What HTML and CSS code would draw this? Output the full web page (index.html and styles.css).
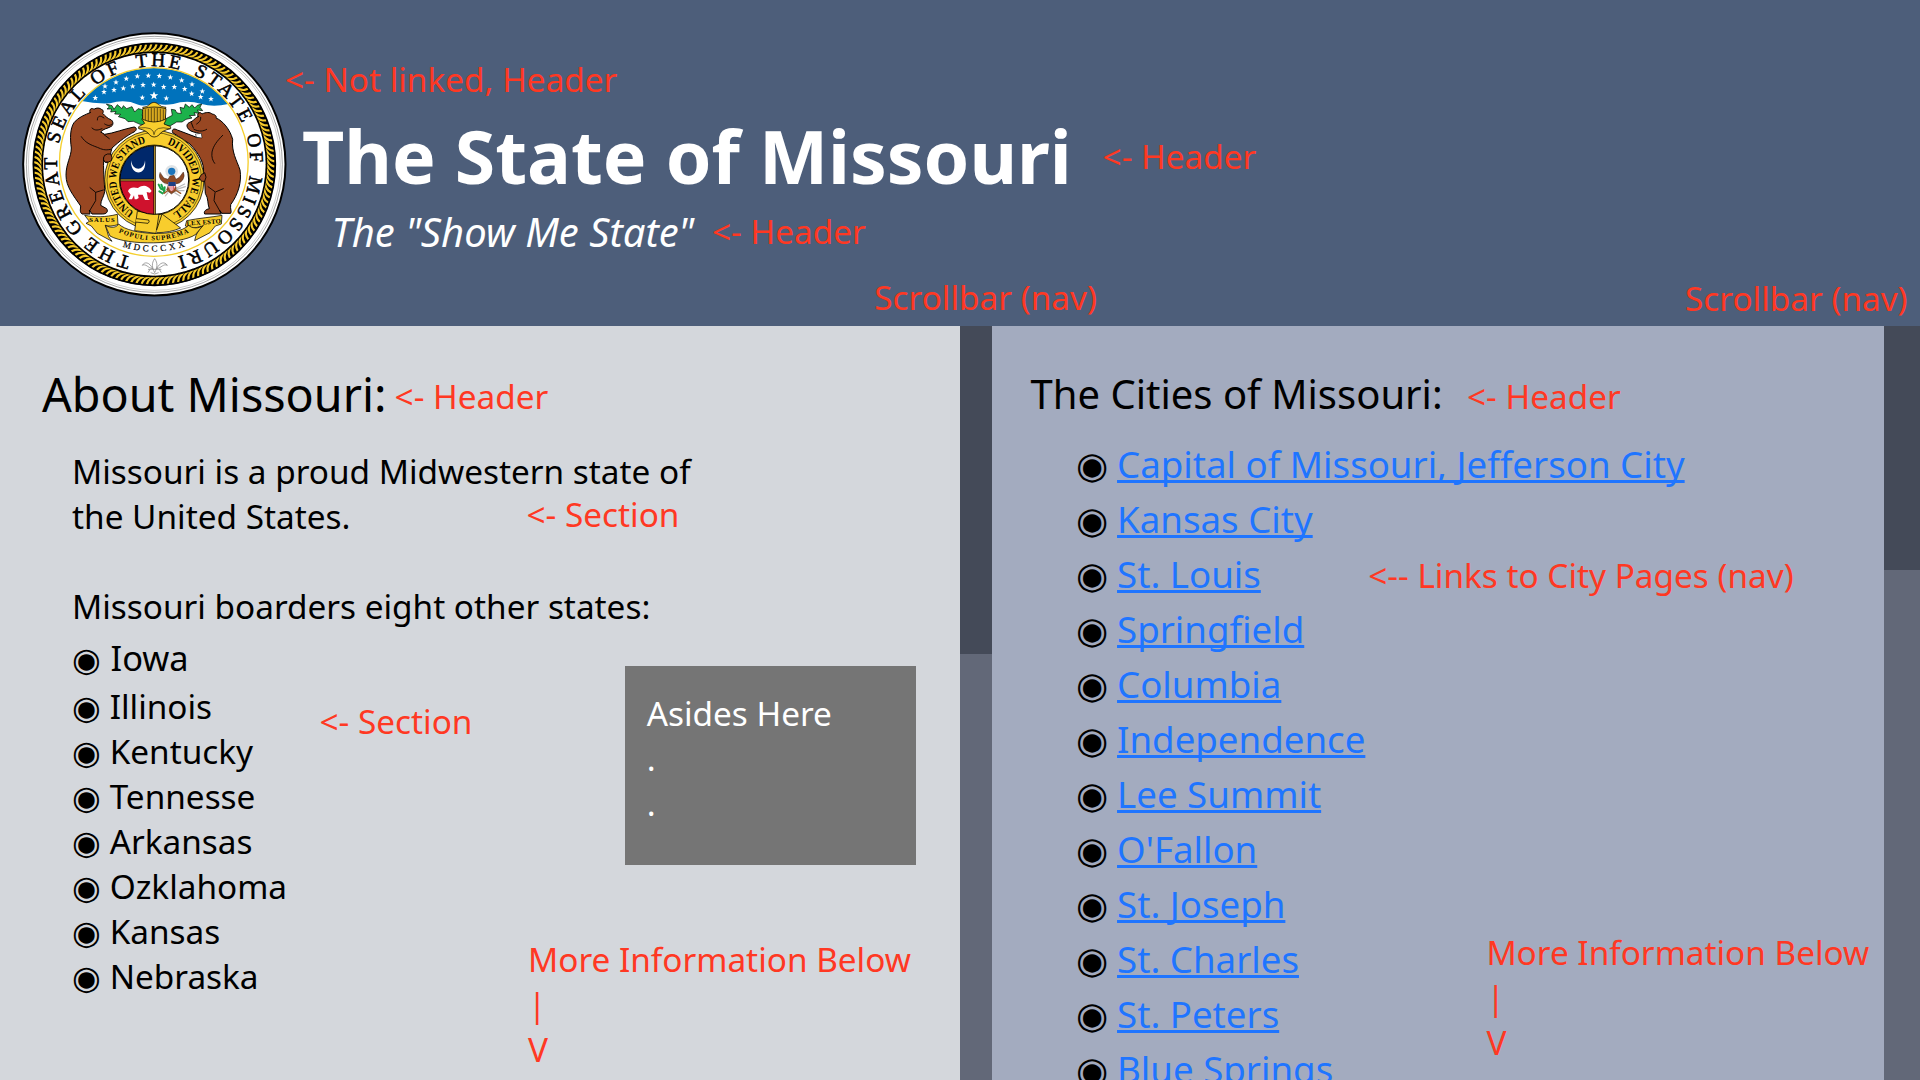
FILE: index.html
```
<!DOCTYPE html>
<html lang="en">
<head>
<meta charset="utf-8">
<title>The State of Missouri</title>
<link rel="stylesheet" href="styles.css">
</head>
<body>
<header class="masthead">
  <svg class="seal" viewBox="0 0 870 870" role="img" aria-label="Great Seal of the State of Missouri">
    <defs>
      <path id="strand" d="M416 98C424 92 430 92 436 82L440 72" fill="none" stroke="#f5c92b" stroke-width="6.5"/>
      <g id="rope3"><use href="#strand"/><use href="#strand" transform="rotate(2.5 433 433)"/><use href="#strand" transform="rotate(5 433 433)"/></g>
      <g id="rope9"><use href="#rope3"/><use href="#rope3" transform="rotate(7.5 433 433)"/><use href="#rope3" transform="rotate(15 433 433)"/></g>
      <g id="rope36"><use href="#rope9"/><use href="#rope9" transform="rotate(22.5 433 433)"/><use href="#rope9" transform="rotate(45 433 433)"/><use href="#rope9" transform="rotate(67.5 433 433)"/></g>
      <path id="legendRing" d="M431 719A290 290 0 0 1 431 139A290 290 0 0 1 431 719"/>
      <path id="beltRing" d="M433 594A114 114 0 0 1 433 366A114 114 0 0 1 433 594"/>
      <path id="mottoArc" d="M322 635Q432 687 542 635"/>
      <path id="yearArc" d="M335 679Q432 711 530 677"/>
      <path id="star" d="M0-9L2.3-2.8L8.6-2.8L3.5 1.1L5.3 7.3L0 3.7L-5.3 7.3L-3.5 1.1L-8.6-2.8L-2.3-2.8Z" fill="#fff"/>
      <clipPath id="field"><circle cx="431.5" cy="426" r="282"/></clipPath>
      <clipPath id="shield"><circle cx="433" cy="480" r="103"/></clipPath>
    </defs>
    <circle cx="433" cy="433" r="393.5" fill="#fff" stroke="#000" stroke-width="6"/>
    <circle cx="433" cy="433" r="384" fill="none" stroke="#555" stroke-width="1.6"/>
    <circle cx="433" cy="433" r="378" fill="none" stroke="#888" stroke-width="1.2"/>
    <circle cx="433" cy="433" r="350" fill="none" stroke="#000" stroke-width="28"/>
    <g><use href="#rope36"/><use href="#rope36" transform="rotate(90 433 433)"/><use href="#rope36" transform="rotate(180 433 433)"/><use href="#rope36" transform="rotate(270 433 433)"/></g>
    <circle cx="433" cy="433" r="363" fill="none" stroke="#000" stroke-width="5"/>
    <circle cx="433" cy="433" r="336.5" fill="none" stroke="#000" stroke-width="5"/>
    <g class="legend">
      <text textLength="139"><textPath href="#legendRing" startOffset="68">THE</textPath></text>
      <text textLength="234"><textPath href="#legendRing" startOffset="237">GREAT</textPath></text>
      <text textLength="175"><textPath href="#legendRing" startOffset="513">SEAL</textPath></text>
      <text textLength="85"><textPath href="#legendRing" startOffset="723">OF</textPath></text>
      <text textLength="130"><textPath href="#legendRing" startOffset="859">THE</textPath></text>
      <text textLength="209"><textPath href="#legendRing" startOffset="1034">STATE</textPath></text>
      <text textLength="84"><textPath href="#legendRing" startOffset="1281">OF</textPath></text>
      <text textLength="347"><textPath href="#legendRing" startOffset="1403">MISSOURI</textPath></text>
    </g>
    <g clip-path="url(#field)">
      <path d="M140 130H720V252Q690 250 655 252Q610 262 575 252Q530 238 490 252Q450 258 432 246Q410 262 385 254Q345 236 300 250Q255 252 215 243H140Z" fill="#0072bc"/>
    </g>
    <g>
      <use href="#star" x="349" y="176"/><use href="#star" x="382" y="169"/><use href="#star" x="415" y="167"/><use href="#star" x="448" y="168"/><use href="#star" x="481" y="172"/><use href="#star" x="515" y="181"/>
      <use href="#star" x="318" y="187"/><use href="#star" x="368" y="199"/><use href="#star" x="399" y="195"/><use href="#star" x="431" y="194"/><use href="#star" x="461" y="201"/><use href="#star" x="493" y="201"/><use href="#star" x="546" y="193"/>
      <use href="#star" x="285" y="199"/><use href="#star" x="340" y="205"/><use href="#star" x="312" y="210"/><use href="#star" x="524" y="207"/><use href="#star" x="545" y="221"/><use href="#star" x="577" y="214"/>
      <use href="#star" x="256" y="234"/><use href="#star" x="282" y="216"/><use href="#star" x="397" y="233"/><use href="#star" x="469" y="235"/><use href="#star" x="572" y="231"/><use href="#star" x="603" y="237"/>
      <use href="#star" transform="translate(432 227) scale(1.5)"/>
    </g>
    <circle cx="431.5" cy="426" r="283" fill="none" stroke="#f5cf2e" stroke-width="4"/>

    <g fill="#1cb24b" stroke="#000" stroke-width="2" stroke-linejoin="round">
      <path d="M289 252L306 257L312 268L322 254L336 266L340 257L350 266L366 260L374 276L384 266Q396 266 400 274L396 286L412 296L412 314L390 313L370 304L354 305L345 296L325 290L332 283L314 282L318 274L302 276L305 267L291 267L298 261Z"/>
      <path d="M575 252L562 256L554 264L546 254L538 262L526 252L522 265L510 262L514 280Q498 282 496 270L484 268L487 286L466 297L456 314L480 318L500 306L516 306L528 298L546 294L538 287L556 286L552 278L568 280L562 270L578 272L570 262Z"/>
    </g>
    <g fill="#984722" stroke="#000" stroke-width="3" stroke-linejoin="round" stroke-linecap="round">
      <path d="M240 278C236 264 248 264 252 268C260 262 270 264 274 268C282 270 280 278 278 280C286 288 290 294 304 300C312 306 309 318 302 320C292 326 280 326 272 336L284 343C310 340 345 326 372 321C382 322 380 332 372 336C352 346 330 362 306 384C304 392 302 398 302 402C308 412 304 424 292 428C282 428 278 420 282 412C278 440 284 490 284 515C282 530 272 540 272 556L290 566C296 576 288 582 278 582H246L238 570L240 582H216C208 576 212 566 212 558C190 526 168 500 168 466C168 430 184 410 184 384C180 356 180 326 192 308C204 292 226 284 240 278Z"/>
      <path d="M240 503L257 517L280 510M257 518V542L239 572M214 350C226 368 240 374 262 382C276 388 284 392 302 388M262 300C262 286 272 286 282 294M246 324C256 334 266 330 276 326M284 312C294 318 300 318 306 312M282 344L298 356" fill="none" stroke-width="2.6"/>
      <path d="M564 290C560 278 570 274 576 282C588 276 600 276 606 282C618 284 620 290 618 294C638 302 660 328 668 358C664 396 680 420 690 450C696 486 684 524 662 554C660 568 666 574 662 580H636L628 570L634 582H584C580 574 588 568 598 566C592 552 596 536 586 520L584 484C580 490 570 482 568 474C568 466 576 460 580 458C584 430 566 400 540 372L488 338C484 328 492 324 502 330L560 352L572 352L574 342L560 338C548 336 536 332 532 322C528 312 536 308 546 304C554 298 558 292 564 290Z"/>
      <path d="M638 346C620 364 610 378 606 396C604 412 608 422 614 430M594 500L616 516L640 506M615 518L612 542L630 574M544 308L550 324M560 312C572 304 572 300 572 292M552 328C568 336 580 334 590 328" fill="none" stroke-width="2.6"/>
    </g>
    <path d="M556 342L574 340L576 354L560 352Z" fill="#fff" stroke="#000" stroke-width="1.5"/>

    <g fill="#f8cd2d" stroke="#000" stroke-width="2.2" stroke-linejoin="round">
      <path d="M224 586C254 592 286 592 322 583L324 614C308 618 296 620 286 616L296 650L306 664L262 640L244 618L228 610L238 604Z"/>
      <path d="M636 586C606 592 566 594 530 602L526 618C548 626 560 624 574 618L558 646L554 662L600 638L616 618L634 612Z"/>
      <path d="M286 616C306 626 320 622 326 612C360 646 500 652 536 616C546 626 568 626 580 616L556 644C510 674 354 678 300 648Z"/>
      <circle cx="433" cy="480" r="149"/>
      <circle cx="433" cy="480" r="142" fill="none" stroke-width="1.5"/>
      <circle cx="433" cy="480" r="105"/>
      <path d="M398 262Q412 262 420 252Q432 242 444 252Q454 262 468 262L462 272L468 300L462 312L482 320V326Q454 332 446 346Q432 356 420 346Q412 332 386 326V320L404 310L396 298L404 272Z"/>
      <path d="M398 266Q432 256 468 266L466 298Q432 314 398 298Z" fill="#d8a91f"/>
      <path d="M406 268V300M415 266V304M424 264V306M433 264V306M442 264V306M451 266V304M460 268V300M386 324Q432 318 432 344Q434 316 480 326" fill="none" stroke-width="1.6"/>
      <path d="M382 574L447 582L438 640L374 632Z"/>
      <path d="M380 596L416 600Q420 606 414 610L376 606M440 630L456 582L512 624Q480 638 440 638"/>
    </g>
    <g fill="#984722" stroke="#000" stroke-width="2.6" stroke-linejoin="round">
      <path d="M284 406Q292 400 302 402Q309 412 304 422Q296 428 286 426Q276 420 284 406Z"/>
      <path d="M584 458Q572 462 568 474Q572 486 584 484Q592 472 584 458Z"/>
    </g>
    <g class="belt-text">
      <text textLength="268" lengthAdjust="spacingAndGlyphs"><textPath href="#beltRing" startOffset="64">UNITED WE STAND</textPath></text>
      <text textLength="262" lengthAdjust="spacingAndGlyphs"><textPath href="#beltRing" startOffset="397">DIVIDED WE FALL</textPath></text>
    </g>
    <g clip-path="url(#shield)">
      <path d="M330 377H434V480H330Z" fill="#00286b"/>
      <path d="M330 480H434V583H330Z" fill="#cf122d"/>
      <path d="M434 377H540V583H434Z" fill="#fff"/>
      <path d="M434 377V583M330 480H434" stroke="#000" stroke-width="7"/>
      <path d="M434 377V583M330 480H434" stroke="#a8862a" stroke-width="4"/>
    </g>
    <circle cx="433" cy="480" r="103" fill="none" stroke="#000" stroke-width="3"/>
    <path d="M363 421C360 470 412 470 405 421C403 454 368 456 363 421Z" fill="#fff"/>
    <path d="M354 514C356 502 370 500 384 504C394 496 406 496 412 500L418 504L425 513L420 518L410 516L414 536L420 540H405L398 524L384 524L386 534L380 538H374L372 526L366 538H356L362 524Z" fill="#fff"/>
    <g stroke-linecap="round" stroke-linejoin="round">
      <circle cx="485" cy="454" r="19" fill="#dfe3e6"/>
      <circle cx="485" cy="454" r="11" fill="#1b75bc"/>
      <path d="M450 458Q444 472 456 484Q466 494 476 492L470 510L484 522L502 510L494 492Q510 492 518 480Q526 468 520 456L508 472L498 478L492 466L480 468L474 478L462 474Z" fill="#8e4a25" stroke="#3b2517" stroke-width="1.4"/>
      <path d="M475 487H496V500Q492 510 485 514Q478 510 475 500Z" fill="#fff" stroke="#c8202f" stroke-width="1"/>
      <path d="M480 499V508M486 499V511M491 499V508" stroke="#c8202f" stroke-width="2.5"/>
      <path d="M475 486H497V498H475Z" fill="#1d3f84"/>
      <path d="M446 494L452 506L464 512M458 504L454 494M448 514L458 520M464 502L462 516" stroke="#1ca34a" stroke-width="6" fill="none"/>
      <path d="M500 504L524 492M500 508L526 500M500 512L522 512M474 518L466 528M494 518L510 528" stroke="#b9b9b9" stroke-width="3.5" fill="none"/>
      <path d="M462 520L476 510M496 510L512 520" stroke="#9c5a2c" stroke-width="4"/>
    </g>
    <g class="ribbon-text">
      <text x="238" y="606" textLength="76">SALUS</text>
      <text x="530" y="617" textLength="103" transform="rotate(-4 530 617)">LEX ESTO</text>
      <text textLength="218"><textPath href="#mottoArc" startOffset="4">POPULI SUPREMA</textPath></text>
    </g>
    <text class="year-text" textLength="190"><textPath href="#yearArc" startOffset="3">MDCCCXX</textPath></text>
    <path d="M434 758C426 742 424 730 434 716C444 730 442 742 434 758M428 746C418 726 404 724 397 736C408 730 414 744 428 746M440 746C450 726 464 724 472 736C460 730 454 744 440 746M414 748H454M420 748L414 758M448 748L454 758M422 758Q434 766 446 758" fill="none" stroke="#777" stroke-width="2"/>
  </svg>
  <div class="titles">
    <h1 class="title">The State of Missouri</h1>
    <p class="tagline">The "Show Me State"</p>
  </div>
  <span class="note note-logo">&lt;- Not linked, Header</span>
  <span class="note note-title">&lt;- Header</span>
  <span class="note note-tagline">&lt;- Header</span>
  <span class="note note-scroll-left">Scrollbar (nav)</span>
  <span class="note note-scroll-right">Scrollbar (nav)</span>
</header>
<main class="columns">
  <section class="panel about">
    <h2 class="about-heading">About Missouri:</h2>
    <p class="about-text">Missouri is a proud Midwestern state of<br>the United States.</p>
    <p class="about-text borders">Missouri boarders eight other states:</p>
    <ul class="states">
      <li class="first">◉ <span class="lead">Iowa</span></li>
      <li>◉ Illinois</li>
      <li>◉ Kentucky</li>
      <li>◉ Tennesse</li>
      <li>◉ Arkansas</li>
      <li>◉ Ozklahoma</li>
      <li>◉ Kansas</li>
      <li>◉ Nebraska</li>
    </ul>
    <aside class="aside-box">Asides Here<br>.<br>.</aside>
    <span class="note note-about">&lt;- Header</span>
    <span class="note note-intro">&lt;- Section</span>
    <span class="note note-states">&lt;- Section</span>
    <span class="note note-more-left">More Information Below<br>|<br>V</span>
  </section>
  <div class="scrollbar"><div class="thumb thumb-left"></div></div>
  <section class="panel cities">
    <h2 class="cities-heading">The Cities of Missouri:</h2>
    <ul class="city-list">
      <li>◉ <a href="#">Capital of Missouri, Jefferson City</a></li>
      <li>◉ <a href="#">Kansas City</a></li>
      <li>◉ <a href="#">St. Louis</a></li>
      <li>◉ <a href="#">Springfield</a></li>
      <li>◉ <a href="#">Columbia</a></li>
      <li>◉ <a href="#">Independence</a></li>
      <li>◉ <a href="#">Lee Summit</a></li>
      <li>◉ <a href="#">O'Fallon</a></li>
      <li>◉ <a href="#">St. Joseph</a></li>
      <li>◉ <a href="#">St. Charles</a></li>
      <li>◉ <a href="#">St. Peters</a></li>
      <li>◉ <a href="#">Blue Springs</a></li>
    </ul>
    <span class="note note-cities">&lt;- Header</span>
    <span class="note note-links">&lt;-- Links to City Pages (nav)</span>
    <span class="note note-more-right">More Information Below<br>|<br>V</span>
  </section>
  <div class="scrollbar scrollbar-right"><div class="thumb thumb-right"></div></div>
</main>
</body>
</html>
```
FILE: styles.css
```
* { box-sizing: border-box; margin: 0; padding: 0; }

body {
  display: flex;
  flex-direction: column;
  width: 1920px;
  height: 1080px;
  overflow: hidden;
  font-family: "Noto Sans", sans-serif;
  font-size: 33.333px;
  line-height: 45px;
  color: #000;
}

.masthead {
  position: relative;
  display: flex;
  flex: 0 0 326px;
  padding: 20px 0 0 10px;
  background: #4d5e7a;
  color: #fff;
}
.seal { flex: none; width: 290px; height: 290px; }
.legend, .belt-text, .ribbon-text, .year-text { font-family: "Liberation Serif", serif; fill: #000; }
.legend { font-size: 58px; stroke: #000; stroke-width: 1.6; }
.belt-text { font-size: 33px; font-weight: bold; }
.ribbon-text { font-size: 20px; font-weight: bold; }
.year-text { font-size: 27px; stroke: #000; stroke-width: .6; }

.titles { padding: 86px 0 0 2px; }
.title { font-size: 73.333px; line-height: 100px; font-weight: 700; white-space: nowrap; }
.tagline { margin-top: -1px; padding-left: 29.6px; font-size: 40px; line-height: 54px; font-style: italic; white-space: nowrap; }

.note {
  position: absolute;
  color: #ff3823;
  white-space: nowrap;
}
.note-logo { left: 285px; top: 57px; }
.note-title { left: 1102.6px; top: 134px; }
.note-tagline { left: 712px; top: 209px; }
.note-scroll-left { left: 874.3px; top: 275px; }
.note-scroll-right { left: 1685px; top: 276px; }

.columns {
  display: grid;
  grid-template-columns: 960px 32px 892px 36px;
  flex: 1;
  min-height: 0;
}
.panel { position: relative; overflow: hidden; }
.about { padding: 36px 0 0 72px; background: #d4d7dc; }
.cities { padding: 41px 0 0 38.5px; background: #a3abbf; }

.about-heading { margin-left: -30px; font-size: 46.667px; line-height: 64px; font-weight: 400; }
.about-text { padding-top: 23px; }
.borders { padding-top: 45px; }
.states, .city-list { list-style: none; }
.states { padding-top: 6px; }
.states li { height: 45px; line-height: 45px; white-space: nowrap; }
.states .first { height: 49px; }
.lead { margin-left: .8px; font-size: 34.4px; }

.aside-box {
  position: absolute;
  left: 625px;
  top: 340px;
  width: 291px;
  height: 199px;
  padding: 25px 21.7px;
  background: #757575;
  color: #fff;
}

.cities-heading { font-size: 40px; line-height: 54px; font-weight: 400; }
.city-list { padding: 16px 0 0 45px; font-size: 36.667px; line-height: 55px; }
.city-list li { height: 55px; white-space: nowrap; }
.city-list a { color: #1f75ff; text-decoration: underline; text-decoration-skip-ink: none; }

.note-about { left: 394.6px; top: 48px; }
.note-intro { left: 526.5px; top: 166px; }
.note-states { left: 319.5px; top: 373px; }
.note-more-left { left: 528px; top: 611px; }
.note-cities { left: 475px; top: 48px; }
.note-links { left: 376.2px; top: 227px; }
.note-more-right { left: 494.4px; top: 604px; }

.scrollbar { background: #626878; }
.thumb { background: #444a58; }
.thumb-left { height: 328px; }
.thumb-right { height: 244px; }
```
